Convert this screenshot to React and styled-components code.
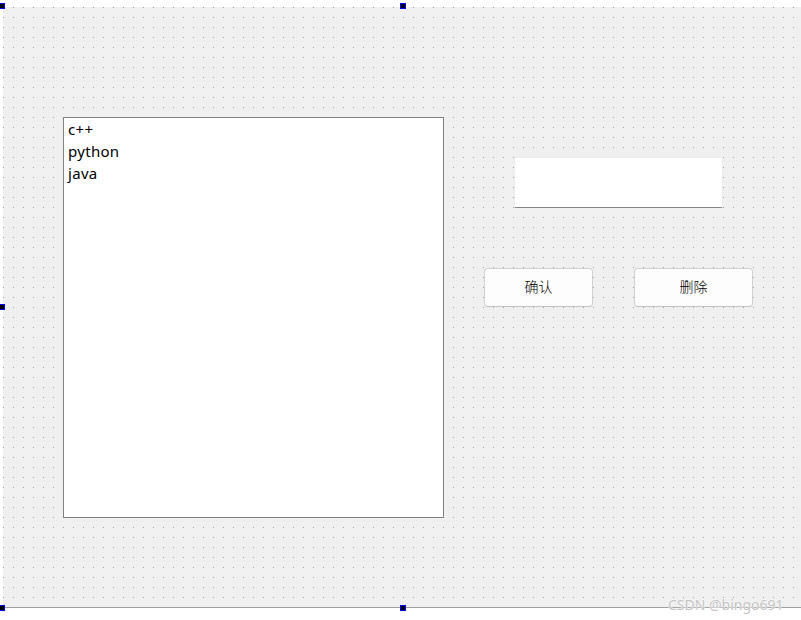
import React from "react";
import styled, { createGlobalStyle } from "styled-components";

const GlobalStyle = createGlobalStyle`
  html, body {
    margin: 0;
    padding: 0;
    background: #ffffff;
    overflow: hidden;
  }
  body {
    font-family: "Noto Sans", "Noto Sans CJK SC", sans-serif;
  }
`;

const Stage = styled.div`
  position: relative;
  width: 801px;
  height: 620px;
  padding: 7px 0 0 3px;
  box-sizing: border-box;
  overflow: hidden;
`;

// designer form with the 10px dot grid
const Form = styled.div`
  width: 800px;
  height: 601px;
  box-sizing: border-box;
  border-bottom: 1px solid #a0a0a0;
  background-color: #a0a0a0;
  background-image: linear-gradient(90deg, #f0f0f0 9px, transparent 9px),
    linear-gradient(#f0f0f0 9px, transparent 9px);
  background-size: 10px 10px;
  background-position: 1px 1px;
  padding: 110px 0 0 60px;
  display: flex;
  align-items: flex-start;
`;

const ListBox = styled.ul`
  margin: 0;
  padding: 0 0 0 4px;
  list-style: none;
  width: 381px;
  height: 401px;
  box-sizing: border-box;
  background: #ffffff;
  border: 1px solid #828282;
`;

const Item = styled.li`
  height: 22px;
  line-height: 22px;
  font-size: 15px;
  letter-spacing: 0.3px;
  color: #000000;
`;

const RightCol = styled.div`
  margin: 40px 0 0 40px;
  display: flex;
  flex-direction: column;
`;

const LineEdit = styled.div`
  margin-left: 30px;
  width: 209px;
  height: 51px;
  box-sizing: border-box;
  background: #ffffff;
  border: 1px solid #ececec;
  border-bottom: 1px solid #848484;
  border-radius: 2px;
`;

const ButtonRow = styled.div`
  margin-top: 60px;
  display: flex;
  gap: 41px;
`;

const Button = styled.button`
  width: ${(p) => p.w}px;
  height: 39px;
  box-sizing: border-box;
  background: #fdfdfd;
  border: 1px solid #d0d0d0;
  border-bottom-color: #c2c2c2;
  border-radius: 4px;
  font-family: "Noto Sans CJK SC", sans-serif;
  font-size: 14px;
  font-weight: 300;
  color: #000000;
  padding: 0 0 3px;
`;

const Handle = styled.div`
  position: absolute;
  left: ${(p) => p.x}px;
  top: ${(p) => p.y}px;
  width: 6px;
  height: 6px;
  box-sizing: border-box;
  background: #000000;
  border: 1px solid #0000ff;
`;

const Watermark = styled.div`
  position: absolute;
  left: 668px;
  top: 595px;
  font-family: "Noto Sans", sans-serif;
  font-size: 14px;
  color: #c4c4c4;
  text-shadow: 0 0 2px #ffffff, 0 0 1px #ffffff;
`;

export default function App() {
  return (
    <>
      <GlobalStyle />
      <Stage>
        <Form>
          <ListBox>
            <Item>c++</Item>
            <Item>python</Item>
            <Item>java</Item>
          </ListBox>
          <RightCol>
            <LineEdit />
            <ButtonRow>
              <Button w={109}>确认</Button>
              <Button w={119}>删除</Button>
            </ButtonRow>
          </RightCol>
        </Form>
        <Handle x={-1} y={3} />
        <Handle x={400} y={3} />
        <Handle x={-1} y={304} />
        <Handle x={-1} y={605} />
        <Handle x={400} y={605} />
        <Watermark>CSDN @bingo691</Watermark>
      </Stage>
    </>
  );
}
